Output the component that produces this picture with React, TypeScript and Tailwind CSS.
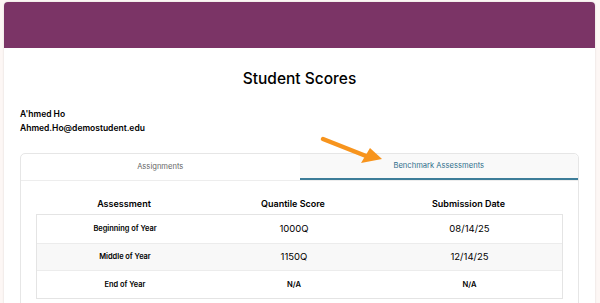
export default function App() {
  const rows = [
    { name: "Beginning of Year", score: "1000Q", date: "08/14/25" },
    { name: "Middle of Year", score: "1150Q", date: "12/14/25" },
    { name: "End of Year", score: "N/A", date: "N/A" },
  ];

  return (
    <div className="h-[303px] w-[600px] overflow-hidden bg-[#fdf7f5] px-1 pt-[2px] font-['Inter',sans-serif] text-black">
      <div className="relative h-[340px] w-[591px] rounded-t-[4px] bg-white shadow-[0_0_2px_rgba(0,0,0,0.15)]">
        <div className="h-[46px] rounded-t-[4px] bg-[#7b3466]" />

        <h1 className="mt-[20px] text-center text-[15.5px] font-medium leading-[22px]">
          Student Scores
        </h1>

        <div className="mt-[17px] px-[16px] text-[8.5px] font-semibold leading-[14px]">
          <div>A'hmed Ho</div>
          <div>Ahmed.Ho@demostudent.edu</div>
        </div>

        {/* Tabs */}
        <div className="mx-[16px] mt-[18px] h-[200px] rounded-t-[5px] border border-[#e6e6e6]">
          <div className="flex h-[27px] border-b border-[#ededed]">
            <div className="flex flex-1 items-center justify-center text-[7.6px] text-[#666]">
              Assignments
            </div>
            <div className="flex flex-1 items-center justify-center rounded-tr-[5px] border-b-2 border-[#3d7d99] bg-[#f9f9f9] text-[7.6px] text-[#2f6f8c]">
              Benchmark Assessments
            </div>
          </div>

          <div className="px-[15px] pt-[17px]">
            <div className="grid grid-cols-[176px_162px_189px] text-[9px] font-semibold leading-[12px]">
              <div className="text-center">Assessment</div>
              <div className="text-center">Quantile Score</div>
              <div className="text-center">Submission Date</div>
            </div>
            <div className="mt-[4px] border border-[#e4e4e4]">
              {rows.map((r, i) => (
                <div
                  key={r.name}
                  className={`grid h-[27.5px] grid-cols-[176px_162px_189px] items-center text-[9.5px] ${
                    i === 1 ? "bg-[#f8f8f8]" : "bg-white"
                  } ${i > 0 ? "border-t border-[#ececec]" : ""}`}
                >
                  <div className="text-center text-[7.4px] font-semibold">{r.name}</div>
                  <div className={`text-center ${r.score === "N/A" ? "text-[7.6px] font-semibold" : ""}`}>
                    {r.score}
                  </div>
                  <div className={`text-center ${r.date === "N/A" ? "text-[7.6px] font-semibold" : ""}`}>
                    {r.date}
                  </div>
                </div>
              ))}
            </div>
          </div>
        </div>

        {/* Annotation arrow */}
        <svg
          className="absolute left-[310px] top-[130px]"
          width="80"
          height="40"
          viewBox="0 0 80 40"
        >
          <line x1="9" y1="7" x2="52" y2="24" stroke="#f7941d" strokeWidth="4.5" strokeLinecap="round" />
          <polygon points="68,27 47,31 56,16" fill="#f7941d" />
        </svg>
      </div>
    </div>
  );
}
